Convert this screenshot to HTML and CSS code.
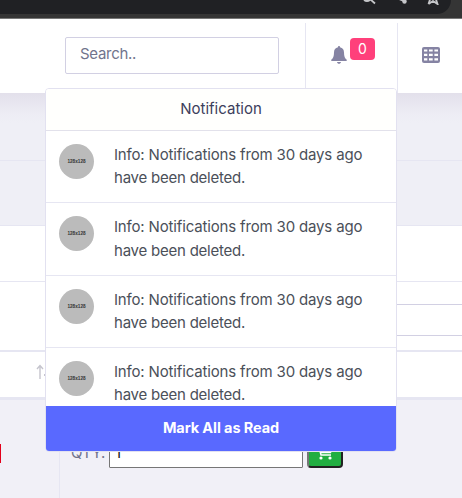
FILE: index.html
```html
<!DOCTYPE html>
<html lang="en">
<head>
<meta charset="utf-8">
<title>Notifications</title>
<link rel="stylesheet" href="styles.css">
</head>
<body>
<div class="browser">
  <div class="omnibox">
    <svg class="chrome-icons" width="82" height="5" viewBox="0 0 82 5"><g fill="none" stroke="#c5c6c9" stroke-width="1.8"><path d="M1 0Q4 2 7 0M7-1l5 4.500"/><path d="M36-1l6 2.500"/><path d="M65.500 4l1.500-4.500M65.500 4l4.500-3 4.500 3-1.500-4.500"/></g><circle cx="41.500" cy="1.500" r="2.200" fill="#c5c6c9"/></svg>
  </div>
</div>
<header class="topbar">
  <div class="search">Search..</div>
  <div class="bell">
    <svg width="16" height="18" viewBox="0 0 16 18" fill="#8583a3"><path d="M8 0c.7 0 1 .5 1 1.200C11.700 1.700 13 3.800 13 6.400c0 4 .9 5.600 2.500 7.100.8.800.4 1.500-.5 1.500H1c-.9 0-1.300-.7-.5-1.500C2.100 12 3 10.400 3 6.400c0-2.600 1.300-4.700 4-5.200C7 .5 7.300 0 8 0zM6 16h4c-.2 1.200-1 1.800-2 1.800S6.200 17.200 6 16z"/></svg>
    <span class="count">0</span>
  </div>
  <div class="apps">
    <svg width="18" height="16" viewBox="0 0 18 16"><rect width="18" height="16" rx="2" fill="#8583a3"/><g fill="#fff"><path d="M2 2.500h3.300v2H2zM7 2.500h3.700v2H7zM12.400 2.500H16v2h-3.600zM2 6.700h3.300v2.300H2zM7 6.700h3.700v2.300H7zM12.400 6.700H16v2.300h-3.600zM2 11.200h3.300v2.300H2zM7 11.200h3.700v2.300H7zM12.400 11.200H16v2.300h-3.600z"/></g></svg>
  </div>
</header>
<main>
  <div class="band first"></div>
  <div class="band second"></div>
  <div class="panel"></div>
  <div class="filter"><div class="field"></div></div>
  <div class="thead"><svg width="8" height="16" viewBox="0 0 8 16" fill="none" stroke="#c5c4cd" stroke-width="1.400"><path d="M4 15V2M1 5l3-3.500L7 5"/></svg><i></i></div>
  <div class="row">
    <div class="cell"><div class="red"></div></div>
    <div class="quantity">
      <span class="label">QTY:</span>
      <div class="number">1</div>
      <div class="cart"><svg width="16" height="14" viewBox="0 0 16 14" fill="none" stroke="#fff" stroke-width="1.500"><path d="M0 1h2l2 8h10M3 2h12l-1.500 4.500H4"/><g fill="#fff" stroke="none"><circle cx="4" cy="12" r="1.600"/><circle cx="13" cy="12" r="1.600"/></g></svg></div>
    </div>
  </div>
</main>
<section class="dropdown">
  <div class="title"><span>Notification</span></div>
  <div class="list">
    <div class="item"><div class="avatar">128x128</div><p>Info: Notifications from 30 days ago<br><span>have been deleted.</span></p></div>
    <div class="item"><div class="avatar">128x128</div><p>Info: Notifications from 30 days ago<br><span>have been deleted.</span></p></div>
    <div class="item"><div class="avatar">128x128</div><p>Info: Notifications from 30 days ago<br><span>have been deleted.</span></p></div>
    <div class="item"><div class="avatar">128x128</div><p>Info: Notifications from 30 days ago<br><span>have been deleted.</span></p></div>
  </div>
  <div class="mark"><span>Mark All as Read</span></div>
</section>
</body>
</html>
```
FILE: styles.css
```css
* { box-sizing: border-box; }
body { margin: 0; width: 462px; height: 498px; overflow: hidden; position: relative; background: #f1f0f7; font-family: Inter, "Liberation Sans", sans-serif; font-size: 15px; color: #4b5059; }
svg { display: block; flex: none; }
.browser { height: 19px; background: #353535; border-bottom: 1px solid #777; }
.omnibox { width: 451px; height: 14px; background: #202124; border-bottom-right-radius: 14px; padding-left: 363px; }
.topbar { height: 74px; background: #fff; display: flex; padding-top: 4px; }
.search { width: 214px; height: 37px; margin: 14px 26px 0 65px; padding-left: 14px; border: 1px solid #d2d0e3; border-radius: 2px; line-height: 32px; color: #71748d; letter-spacing: -.3px; }
.bell { width: 92px; border-left: 1px solid #e6e6f2; display: flex; padding: 23px 0 0 25px; gap: 3px; }
.count { width: 25px; height: 22px; margin-top: -8px; border-radius: 4px; background: #ff407b; color: #fff; text-align: center; line-height: 21px; font-size: 14px; }
.apps { border-left: 1px solid #e6e6f2; padding: 24px 0 0 24px; }
.band { background: #efeff6; border-bottom: 1px solid #e6e6f2; }
.first { height: 68px; background: linear-gradient(#e3e0eb, #edecf4 20px, #efeff6 30px); }
.second { height: 65px; }
.panel { height: 56px; background: #fff; border-bottom: 1px solid #e6e6f2; }
.filter { height: 68px; padding-top: 22px; background: #fff; }
.field { height: 32px; margin-left: 300px; border: solid #d2d0e3; border-width: 1px 0; }
.thead { height: 50px; background: #fff; border-top: 2px solid #e6e6f2; border-bottom: 3px solid #e6e6f2; display: flex; padding: 12px 0 0 36px; }
.thead i { width: 1px; height: 2px; margin-top: 10px; background: #c5c4cd; }
.row { display: flex; height: 98px; background: #f1f0f7; }
.cell { width: 60px; border-right: 1px solid #e6e6f2; padding-top: 44px; }
.red { width: 1px; height: 19px; background: #e3001b; }
.quantity { display: flex; padding-top: 38px; }
.label { width: 49px; padding: 5px 0 0 11px; color: #71748d; line-height: 20px; white-space: nowrap; letter-spacing: -.1px; }
.number { width: 194px; height: 30px; border: 1px solid #767676; border-radius: 1px; background: #fff; color: #222; padding: 3px 5px; line-height: 22px; }
.cart { width: 36px; height: 30px; margin-left: 4px; background: #21ae41; border: 2px solid #222; border-left-color: #767676; border-radius: 4px; padding: 6px 0 0 8px; }
.dropdown { position: absolute; left: 45px; top: 88px; width: 352px; height: 364px; background: #fff; border: 1px solid #e2e1f0; border-radius: 4px; overflow: hidden; }
.title { height: 42px; background: #fffffd; border-bottom: 1px solid #e2e1eb; text-align: center; line-height: 39px; color: #3d405c; letter-spacing: 0; }
.list { height: 275px; overflow: hidden; }
.item { height: 72.400px; display: flex; gap: 20px; padding: 13px 13px 0; border-bottom: 1px solid #e6e6f2; }
.avatar { flex: none; width: 35px; height: 35px; border-radius: 50%; background: #bbb; color: #333; font-family: "Liberation Sans", sans-serif; font-size: 4.700px; font-weight: 700; line-height: 35px; text-align: center; }
.item p { margin: -1px 0 0; line-height: 23.200px; white-space: nowrap; letter-spacing: -.16px; }
.item p span { letter-spacing: -.23px; }
.mark { height: 45px; background: #5969ff; color: #fff; text-align: center; line-height: 43px; font-weight: 700; font-size: 14.500px; letter-spacing: -.1px; }
```
